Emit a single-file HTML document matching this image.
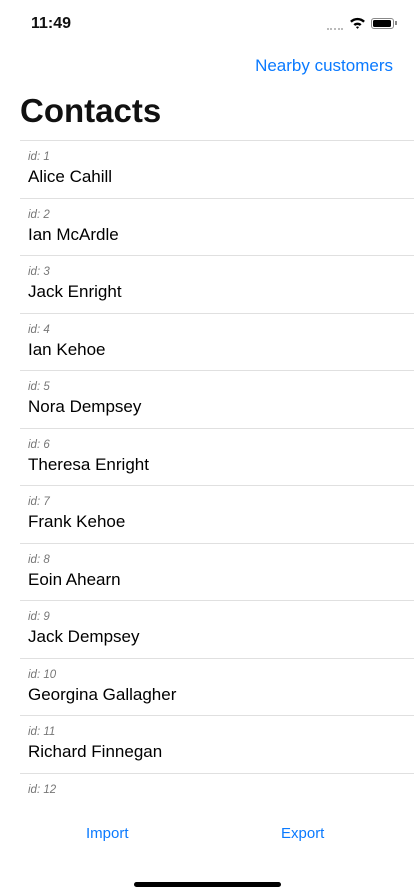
<!DOCTYPE html>
<html><head><meta charset="utf-8"><style>
body{margin:0;width:414px;height:896px;background:#fff;font-family:"Liberation Sans",sans-serif;position:relative;overflow:hidden}
.abs{position:absolute}
.row{position:absolute;left:20px;right:0;height:57.5px;border-top:1px solid #e0e0e0}
.id{position:absolute;left:8px;top:10px;font-size:11.5px;font-style:italic;color:#777}
.nm{position:absolute;left:8px;top:26px;font-size:17px;color:#000}
.btn{position:absolute;top:825px;font-size:15px;color:#0a7aff;font-weight:500}
</style></head><body>
<div class="abs" style="left:31px;top:15px;font-size:16px;font-weight:bold;color:#111">11:49</div>
<div class="abs" style="left:327px;top:28px;width:16px;height:2px;border-top:2px dotted #bbb"></div>
<svg class="abs" style="left:349px;top:16px" width="17" height="13" viewBox="0 0 16 12"><path d="M1 4.5A10 10 0 0 1 15 4.5L13.4 6.1A7.7 7.7 0 0 0 2.6 6.1Z M4.2 7.6A5.5 5.5 0 0 1 11.8 7.6L10.2 9.2A3.3 3.3 0 0 0 5.8 9.2Z M8 12L6.6 10.5A2 2 0 0 1 9.4 10.5Z" fill="#000"/></svg>
<div class="abs" style="left:371px;top:18px;width:21px;height:9px;border:1px solid #888;border-radius:3px"></div>
<div class="abs" style="left:373px;top:20px;width:18px;height:7px;background:#000;border-radius:1.5px"></div>
<div class="abs" style="left:395px;top:21px;width:1.5px;height:4px;background:#888"></div>
<div class="abs" style="right:21px;top:56px;font-size:17px;color:#0a7aff">Nearby customers</div>
<div class="abs" style="left:20px;top:92px;font-size:33px;font-weight:bold;color:#111">Contacts</div>
<div class="abs" style="left:0;top:140px;width:414px;height:661px;overflow:hidden">
<div class="row" style="top:0"><div class="id">id: 1</div><div class="nm">Alice Cahill</div></div>
<div class="row" style="top:57.5px"><div class="id">id: 2</div><div class="nm">Ian McArdle</div></div>
<div class="row" style="top:115px"><div class="id">id: 3</div><div class="nm">Jack Enright</div></div>
<div class="row" style="top:172.5px"><div class="id">id: 4</div><div class="nm">Ian Kehoe</div></div>
<div class="row" style="top:230px"><div class="id">id: 5</div><div class="nm">Nora Dempsey</div></div>
<div class="row" style="top:287.5px"><div class="id">id: 6</div><div class="nm">Theresa Enright</div></div>
<div class="row" style="top:345px"><div class="id">id: 7</div><div class="nm">Frank Kehoe</div></div>
<div class="row" style="top:402.5px"><div class="id">id: 8</div><div class="nm">Eoin Ahearn</div></div>
<div class="row" style="top:460px"><div class="id">id: 9</div><div class="nm">Jack Dempsey</div></div>
<div class="row" style="top:517.5px"><div class="id">id: 10</div><div class="nm">Georgina Gallagher</div></div>
<div class="row" style="top:575px"><div class="id">id: 11</div><div class="nm">Richard Finnegan</div></div>
<div class="row" style="top:632.5px"><div class="id">id: 12</div><div class="nm">Christina</div></div>
</div>
<div class="btn" style="left:86px">Import</div>
<div class="btn" style="left:281px">Export</div>
<div class="abs" style="left:134px;top:882px;width:147px;height:5px;background:#000;border-radius:3px"></div>
</body></html>
